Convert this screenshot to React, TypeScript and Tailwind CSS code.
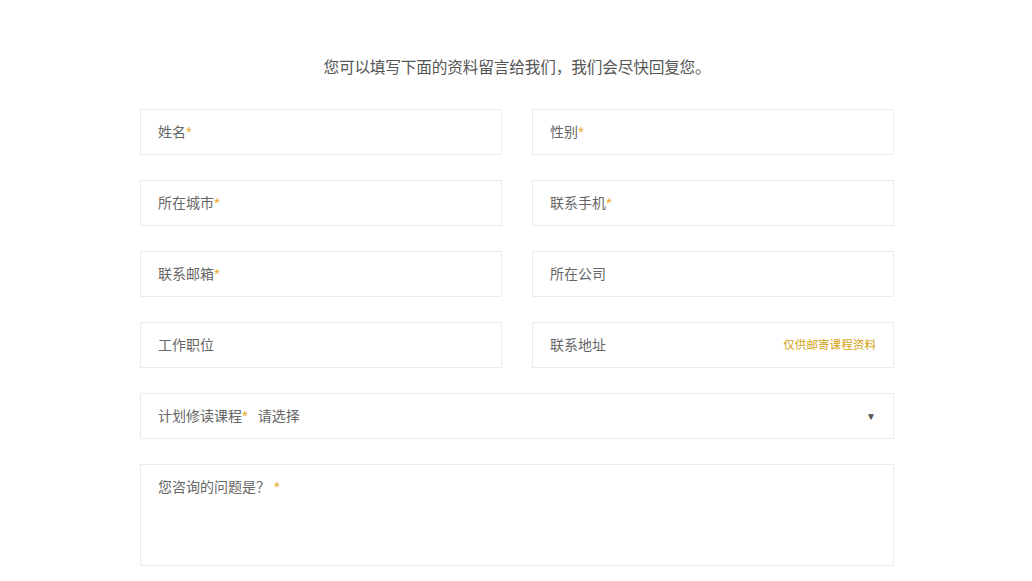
import React from 'react';

const font = { fontFamily: '"Liberation Sans", "Noto Sans CJK SC", sans-serif' };

const Star = () => <span className="text-[15px] text-[#e6a817]">*</span>;

const Field = ({ label, required, hint }: { label: string; required?: boolean; hint?: string }) => (
  <div className="h-[46px] border border-[#ebebeb] bg-white flex items-center justify-between pl-[17px] pr-[17px]">
    <span className="text-[14px] text-[#666]">
      {label}
      {required && <Star />}
    </span>
    {hint && <span className="text-[11.6px] text-[#d4a20f]">{hint}</span>}
  </div>
);

const App: React.FC = () => {
  return (
    <div className="min-h-[581px] bg-white" style={font}>
      <div className="w-[754px] ml-[140px] pt-[56px]">
        <p className="text-center text-[15.7px] leading-[24px] text-[#555] mb-[29px] tracking-[-0.2px]">
          您可以填写下面的资料留言给我们，我们会尽快回复您。
        </p>
        <div className="grid grid-cols-2 gap-x-[30px] gap-y-[25px]">
          <Field label="姓名" required />
          <Field label="性别" required />
          <Field label="所在城市" required />
          <Field label="联系手机" required />
          <Field label="联系邮箱" required />
          <Field label="所在公司" />
          <Field label="工作职位" />
          <Field label="联系地址" hint="仅供邮寄课程资料" />
          <div className="col-span-2 h-[46px] border border-[#ebebeb] flex items-center justify-between pl-[17px] pr-[17px]">
            <span className="text-[14px] text-[#666]">
              计划修读课程<Star />
              <span className="ml-[10px]">请选择</span>
            </span>
            <span className="text-[10px] text-[#555]">▼</span>
          </div>
          <div className="col-span-2 h-[102px] border border-[#ebebeb] pl-[17px] pt-[10px]">
            <span className="text-[14px] text-[#666]">
              您咨询的问题是？ <Star />
            </span>
          </div>
        </div>
      </div>
    </div>
  );
};

export default App;
